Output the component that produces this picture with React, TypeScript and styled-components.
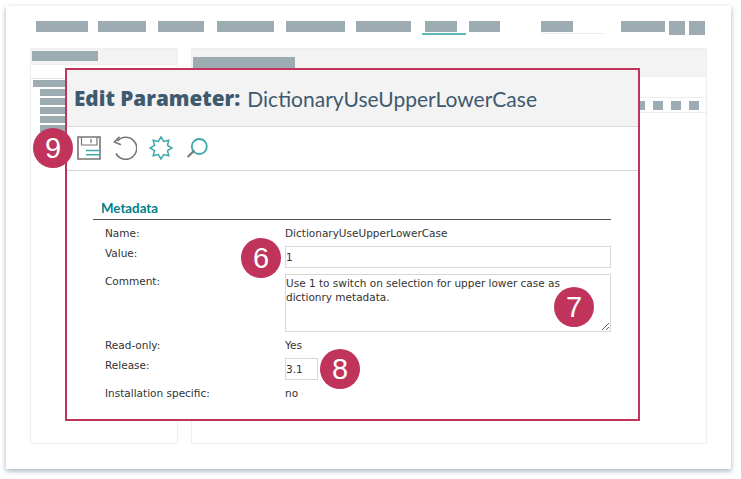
import styled, { createGlobalStyle } from "styled-components";

const GlobalStyle = createGlobalStyle`
  html, body {
    margin: 0;
    padding: 0;
    background: #fff;
  }
`;

const navBlocks = [
  { gap: 0, width: 52 },
  { gap: 10, width: 48 },
  { gap: 12, width: 46 },
  { gap: 13, width: 57 },
  { gap: 12, width: 59 },
  { gap: 11, width: 55 },
];

const leftItems = [0, 1, 2, 3, 4, 5, 6, 7];
const toolbarSquares = [0, 1, 2, 3];

function SaveIcon() {
  return (
    <svg width="24" height="24" viewBox="0 0 24 24" fill="none">
      <path d="M1 1h22v22H1z" stroke="#757575" strokeWidth="1.6" />
      <path d="M4.5 1v8h15.500V1M14 3v4" stroke="#757575" strokeWidth="1.2" />
      <path d="M9 14.500h13M9 18.800h13" stroke="#3fa9a9" strokeWidth="1.5" />
    </svg>
  );
}

function UndoIcon() {
  return (
    <svg width="24" height="24" viewBox="0 0 24 24" fill="none">
      <path d="M4.5 5A11 11 0 1 1 3 17.500" stroke="#757575" strokeWidth="1.6" />
      <path d="M6.5 0.8L1.5 6L8 8.7" stroke="#757575" strokeWidth="1.6" />
    </svg>
  );
}

function BurstIcon() {
  return (
    <svg width="24" height="24" viewBox="0 0 24 24" fill="none">
      <path
        d="M12 1L14.7 5.5L19.8 4.2L18.5 9.3L23 12L18.5 14.7L19.8 19.8L14.7 18.5L12 23L9.3 18.5L4.2 19.800L5.5 14.7L1 12L5.5 9.3L4.2 4.2L9.3 5.5Z"
        stroke="#3fa9a9"
        strokeWidth="1.5"
      />
    </svg>
  );
}

function SearchIcon() {
  return (
    <svg width="24" height="24" viewBox="0 0 24 24" fill="none">
      <circle cx="14.3" cy="10.5" r="7.5" stroke="#3fa9a9" strokeWidth="1.8" />
      <path d="M9.3 14.500L2.7 21" stroke="#757575" strokeWidth="2" />
    </svg>
  );
}

export default function App() {
  return (
    <>
      <GlobalStyle />
      <Page>
        <Shot>
          <Nav>
            {navBlocks.map((b) => (
              <NavBlock key={b.width} $width={b.width} $gap={b.gap} />
            ))}
            <NavTab>
              <NavBlock $width={32} />
            </NavTab>
            <NavBlock $width={31} $gap={3} />
            <SearchStub>
              <NavBlock $width={32} />
            </SearchStub>
            <NavEnd>
              <NavBlock $width={44} />
              <NavSquare />
              <NavSquare />
            </NavEnd>
          </Nav>
          <Columns>
            <LeftPanel>
              <LeftHead>
                <Mask $width={66} $height={10} />
              </LeftHead>
              <LeftSearch />
              <Tree>
                <Mask $width={60} $height={7} />
                {leftItems.map((i) => (
                  <TreeItem key={i} />
                ))}
              </Tree>
            </LeftPanel>
            <RightPanel>
              <RightHead>
                <Mask $width={102} $height={11} />
              </RightHead>
              <RightGap />
              <RightBar>
                {toolbarSquares.map((i) => (
                  <BarSquare key={i} />
                ))}
              </RightBar>
            </RightPanel>
          </Columns>

          <Dialog>
            <DialogHead>
              <strong>Edit Parameter:</strong>
              <span>DictionaryUseUpperLowerCase</span>
            </DialogHead>
            <Toolbar>
              <SaveIcon />
              <UndoIcon />
              <BurstIcon />
              <SearchIcon />
            </Toolbar>
            <DialogBody>
              <SectionTitle>Metadata</SectionTitle>
              <Form>
                <span>Name:</span>
                <span>DictionaryUseUpperLowerCase</span>
                <span>Value:</span>
                <Field defaultValue="1" />
                <span>Comment:</span>
                <Comment defaultValue="Use 1 to switch on selection for upper lower case as dictionry metadata." />
                <span>Read-only:</span>
                <span>Yes</span>
                <span>Release:</span>
                <ShortField defaultValue="3.1" />
                <span>Installation specific:</span>
                <span>no</span>
              </Form>
            </DialogBody>
          </Dialog>

          <Badge $x={33} $y={128}>9</Badge>
          <Badge $x={241} $y={238}>6</Badge>
          <Badge $x={554} $y={287}>7</Badge>
          <Badge $x={320} $y={349}>8</Badge>
        </Shot>
      </Page>
    </>
  );
}

const Page = styled.div`
  width: 741px;
  height: 479px;
  padding: 6px 0 0 6px;
  box-sizing: border-box;
  overflow: hidden;
`;

const Shot = styled.div`
  position: relative;
  width: 725px;
  height: 463px;
  padding: 15px 24px 0;
  box-sizing: border-box;
  background: #fff;
  box-shadow: 0 2px 5px rgba(120, 145, 155, 0.7);
`;

const Nav = styled.div`
  display: flex;
  align-items: flex-start;
  height: 27px;
  padding-left: 6px;
`;

const NavBlock = styled.div<{ $width: number; $gap?: number }>`
  width: ${(p) => p.$width}px;
  height: 11px;
  margin-left: ${(p) => p.$gap ?? 0}px;
  background: #9dacb2;
`;

const NavTab = styled.div`
  width: 41px;
  height: 12px;
  padding-left: 3px;
  margin-left: 11px;
  border-bottom: 2px solid #62b5b7;
`;

const SearchStub = styled.div`
  width: 63px;
  height: 12px;
  margin-left: 41px;
  border-bottom: 1px solid #eeeeee;
`;

const NavEnd = styled.div`
  display: flex;
  gap: 4px;
  margin-left: 17px;
`;

const NavSquare = styled.div`
  width: 16px;
  height: 14px;
  background: #9dacb2;
`;

const Columns = styled.div`
  display: flex;
  gap: 13px;
`;

const Panel = styled.div`
  height: 396px;
  border: 1px solid #eeeeee;
  box-sizing: border-box;
`;

const LeftPanel = styled(Panel)`
  width: 148px;
`;

const RightPanel = styled(Panel)`
  flex: 1;
`;

const LeftHead = styled.div`
  height: 13px;
  padding: 2px 1px 0;
  background: #f3f3f3;
  border-bottom: 1px solid #eeeeee;
`;

const LeftSearch = styled.div`
  height: 13px;
  border-bottom: 1px solid #e4e4e4;
`;

const Mask = styled.div<{ $width: number; $height: number }>`
  width: ${(p) => p.$width}px;
  height: ${(p) => p.$height}px;
  background: #9dacb2;
`;

const Tree = styled.div`
  display: flex;
  flex-direction: column;
  gap: 2px;
  padding: 1px 2px;
`;

const TreeItem = styled.div`
  width: 40px;
  height: 7px;
  margin-left: 7px;
  background: #9dacb2;
`;

const RightHead = styled.div`
  height: 19px;
  padding: 8px 1px 0;
  background: #f3f3f3;
  border-bottom: 1px solid #eeeeee;
`;

const RightGap = styled.div`
  height: 20px;
`;

const RightBar = styled.div`
  display: flex;
  justify-content: flex-end;
  gap: 8px;
  height: 11px;
  padding: 3px 7px 0 0;
  border-top: 1px solid #eeeeee;
  border-bottom: 1px solid #eeeeee;
`;

const BarSquare = styled.div`
  width: 10px;
  height: 9px;
  background: #9dacb2;
`;

const Dialog = styled.div`
  position: absolute;
  left: 59px;
  top: 62px;
  width: 575px;
  height: 353px;
  border: 2px solid #c0335b;
  box-sizing: border-box;
  background: #fff;
`;

const DialogHead = styled.div`
  height: 57px;
  padding: 0 0 0 7px;
  box-sizing: border-box;
  display: flex;
  align-items: center;
  gap: 7px;
  background: #f3f3f3;
  border-bottom: 1px solid #d8d8d8;
  font-family: Lato, sans-serif;
  font-size: 21px;
  color: #3f5a6e;
  white-space: pre;

  strong {
    font-family: "Open Sans", sans-serif;
    font-size: 20.7px;
    font-weight: 800;
  }
`;

const Toolbar = styled.div`
  height: 44px;
  padding: 9px 0 0 10px;
  box-sizing: border-box;
  display: flex;
  gap: 12px;
  border-bottom: 1px solid #d8d8d8;
`;

const DialogBody = styled.div`
  padding: 29px 27px 0 26px;
`;

const SectionTitle = styled.div`
  padding: 0 0 3px 8px;
  border-bottom: 1px solid #4a5560;
  font-family: Lato, sans-serif;
  font-size: 13.3px;
  font-weight: 700;
  line-height: 16px;
  color: #007f8a;
`;

const Form = styled.div`
  display: grid;
  grid-template-columns: 180px 1fr;
  row-gap: 6px;
  padding: 6px 0 0 12px;
  font-family: "DejaVu Sans", sans-serif;
  font-size: 10.5px;
  line-height: 14px;
  color: #333;
`;

const Field = styled.input`
  width: 326px;
  height: 22px;
  padding: 0;
  box-sizing: border-box;
  border: 1px solid #d8d8d8;
  outline: none;
  font: inherit;
  color: inherit;
`;

const ShortField = styled(Field)`
  width: 33px;
`;

const Comment = styled.textarea`
  display: block;
  width: 326px;
  height: 58px;
  padding: 1px 40px 1px 0;
  box-sizing: border-box;
  border: 1px solid #d8d8d8;
  outline: none;
  font: inherit;
  color: inherit;
`;

const Badge = styled.div<{ $x: number; $y: number }>`
  position: absolute;
  left: ${(p) => p.$x - 6}px;
  top: ${(p) => p.$y - 6}px;
  width: 40px;
  height: 40px;
  border-radius: 50%;
  background: #c0335b;
  color: #fff;
  display: flex;
  align-items: center;
  justify-content: center;
  font-family: "Liberation Sans", sans-serif;
  font-size: 29px;
`;
